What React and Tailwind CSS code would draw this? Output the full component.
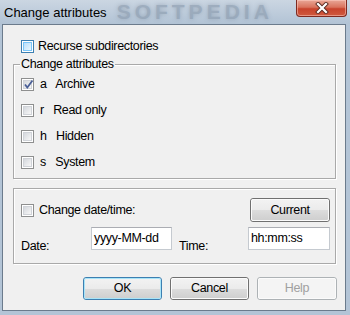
import React, { useState } from "react";

function CheckBox({ checked = false, hot = false }) {
  return (
    <span
      className={
        "flex h-[13px] w-[13px] shrink-0 items-center justify-center border " +
        (hot ? "border-[#3c7fb1] bg-white" : "border-[#8e8f8f] bg-white")
      }
    >
      <span
        className={
          "relative h-[9px] w-[9px] border " +
          (hot
            ? "border-[#79c6f9] bg-gradient-to-br from-[#b9dffb] to-[#e9f7fe]"
            : "border-[#d0d3d8] bg-gradient-to-br from-[#d5d8dd] to-[#f7f7f7]")
        }
      >
        {checked && (
          <svg className="absolute -left-[1px] -top-[2px]" width="11" height="11" viewBox="0 0 11 11">
            <path d="M2 5.5 L4.3 8.5 L9.5 1.5" fill="none" stroke="#4a5f97" strokeWidth="1.8" />
          </svg>
        )}
      </span>
    </span>
  );
}

function Button({ children, isDefault = false, disabled = false, className = "" }) {
  return (
    <button
      type="button"
      className={
        "relative flex items-center justify-center rounded-[3px] border " +
        (isDefault ? "border-[#3c7fb1] " : "border-[#707070] ") +
        (disabled ? "border-[#adb2b5] text-[#a0a0a0] " : "text-black ") +
        className
      }
    >
      <span
        className={
          "absolute inset-0 rounded-[2px] border " +
          (isDefault ? "border-[#a8e4f8] " : "border-[#fbfbfb] ") +
          (disabled
            ? "bg-[#f4f4f4]"
            : "bg-[linear-gradient(#f2f2f2_0%,#ebebeb_50%,#dddddd_50%,#cfcfcf_100%)]")
        }
      />
      <span className="relative">{children}</span>
    </button>
  );
}

function GroupBox({ title, className = "", children }) {
  return (
    <div
      className={
        "relative border border-[#a9a9a9] shadow-[inset_1px_1px_0_#ffffff,1px_1px_0_#ffffff] " + className
      }
    >
      {title && (
        <span className="absolute -top-[8px] left-[6px] bg-[#f0f0f0] pl-[1px] pr-[1px] leading-[14px]">
          {title}
        </span>
      )}
      {children}
    </div>
  );
}

function AttrRow({ letter, label, checked }) {
  return (
    <div className="flex h-[13px] items-center">
      <CheckBox checked={checked} />
      <span className="ml-[6px] whitespace-pre leading-[13px]">{letter + "   " + label}</span>
    </div>
  );
}

export default function App() {
  const [attrs] = useState([
    { letter: "a", label: "Archive", checked: true },
    { letter: "r", label: "Read only", checked: false },
    { letter: "h", label: "Hidden", checked: false },
    { letter: "s", label: "System", checked: false },
  ]);

  return (
    <div className="relative flex h-[315px] w-[350px] flex-col overflow-hidden bg-[#b3c4d6] font-['Liberation_Sans',Arial,sans-serif] text-[12.5px] tracking-[-0.35px] text-black">
      {/* title bar */}
      <div className="relative flex h-[24px] shrink-0 items-start bg-gradient-to-b from-[#cbd6e2] to-[#b2c3d5]">
        <span className="relative pl-[4px] pt-[3px] text-[13px] tracking-normal text-black">
          Change attributes
        </span>
        <span className="ml-[10px] select-none text-[21px] font-bold leading-[24px] tracking-[4px] text-[#8596a9] opacity-60 [text-shadow:0_0_4px_#7f90a3]">
          SOFTPEDIA
        </span>
        <div className="ml-auto mr-[3px] flex h-[17px] w-[51px] items-center justify-center rounded-b-[4px] border border-t-0 border-[#7e2a20] bg-[linear-gradient(#e9a797_0%,#d9735d_45%,#c8432c_55%,#cf5a3f_100%)] shadow-[inset_0_0_0_1px_rgba(255,210,200,0.5)]">
          <svg width="14" height="12" viewBox="0 0 14 12">
            <path d="M3 2 L11 10 M11 2 L3 10" stroke="#5a2a22" strokeWidth="4" strokeLinecap="square" />
            <path d="M3 2 L11 10 M11 2 L3 10" stroke="#ffffff" strokeWidth="2.2" strokeLinecap="square" />
          </svg>
        </div>
      </div>

      {/* client area */}
      <div className="ml-[2px] flex h-[287px] w-[344px] flex-col border border-[#6b7b8c] bg-[#f0f0f0]">
        <div className="ml-[18px] mt-[14px] flex h-[14px] items-center">
          <CheckBox hot />
          <span className="ml-[4px] leading-[14px]">Recurse subdirectories</span>
        </div>

        <GroupBox title="Change attributes" className="ml-[10px] mt-[11px] h-[115px] w-[323px]">
          <div className="flex flex-col gap-[13px] pl-[7px] pt-[13px]">
            {attrs.map((a) => (
              <AttrRow key={a.letter} letter={a.letter} label={a.label} checked={a.checked} />
            ))}
          </div>
        </GroupBox>

        <GroupBox className="ml-[10px] mt-[9px] h-[76px] w-[323px]">
          <div className="mt-[9px] flex h-[24px] items-center justify-between pl-[7px] pr-[5px]">
            <div className="flex items-center">
              <CheckBox />
              <span className="ml-[5px]">Change date/time:</span>
            </div>
            <Button className="h-[24px] w-[80px]">Current</Button>
          </div>
          <div className="mt-[5px] flex h-[23px] items-stretch pl-[7px]">
            <span className="flex w-[70px] items-end leading-[8px]">Date:</span>
            <div className="flex w-[81px] items-start border border-[#c5cad0] border-t-[#abadb3] bg-white pl-[2px] pt-[4px] leading-[13px]">
              yyyy-MM-dd
            </div>
            <span className="ml-[7px] flex w-[69px] items-end leading-[8px]">Time:</span>
            <div className="flex w-[82px] items-start border border-[#c5cad0] border-t-[#abadb3] bg-white pl-[2px] pt-[4px] leading-[13px]">
              hh:mm:ss
            </div>
          </div>
        </GroupBox>

        <div className="ml-[80px] mt-[13px] flex gap-[8px]">
          <Button isDefault className="h-[23px] w-[79px]">
            OK
          </Button>
          <Button className="h-[23px] w-[79px]">Cancel</Button>
          <Button disabled className="h-[23px] w-[80px]">
            Help
          </Button>
        </div>
      </div>
    </div>
  );
}
